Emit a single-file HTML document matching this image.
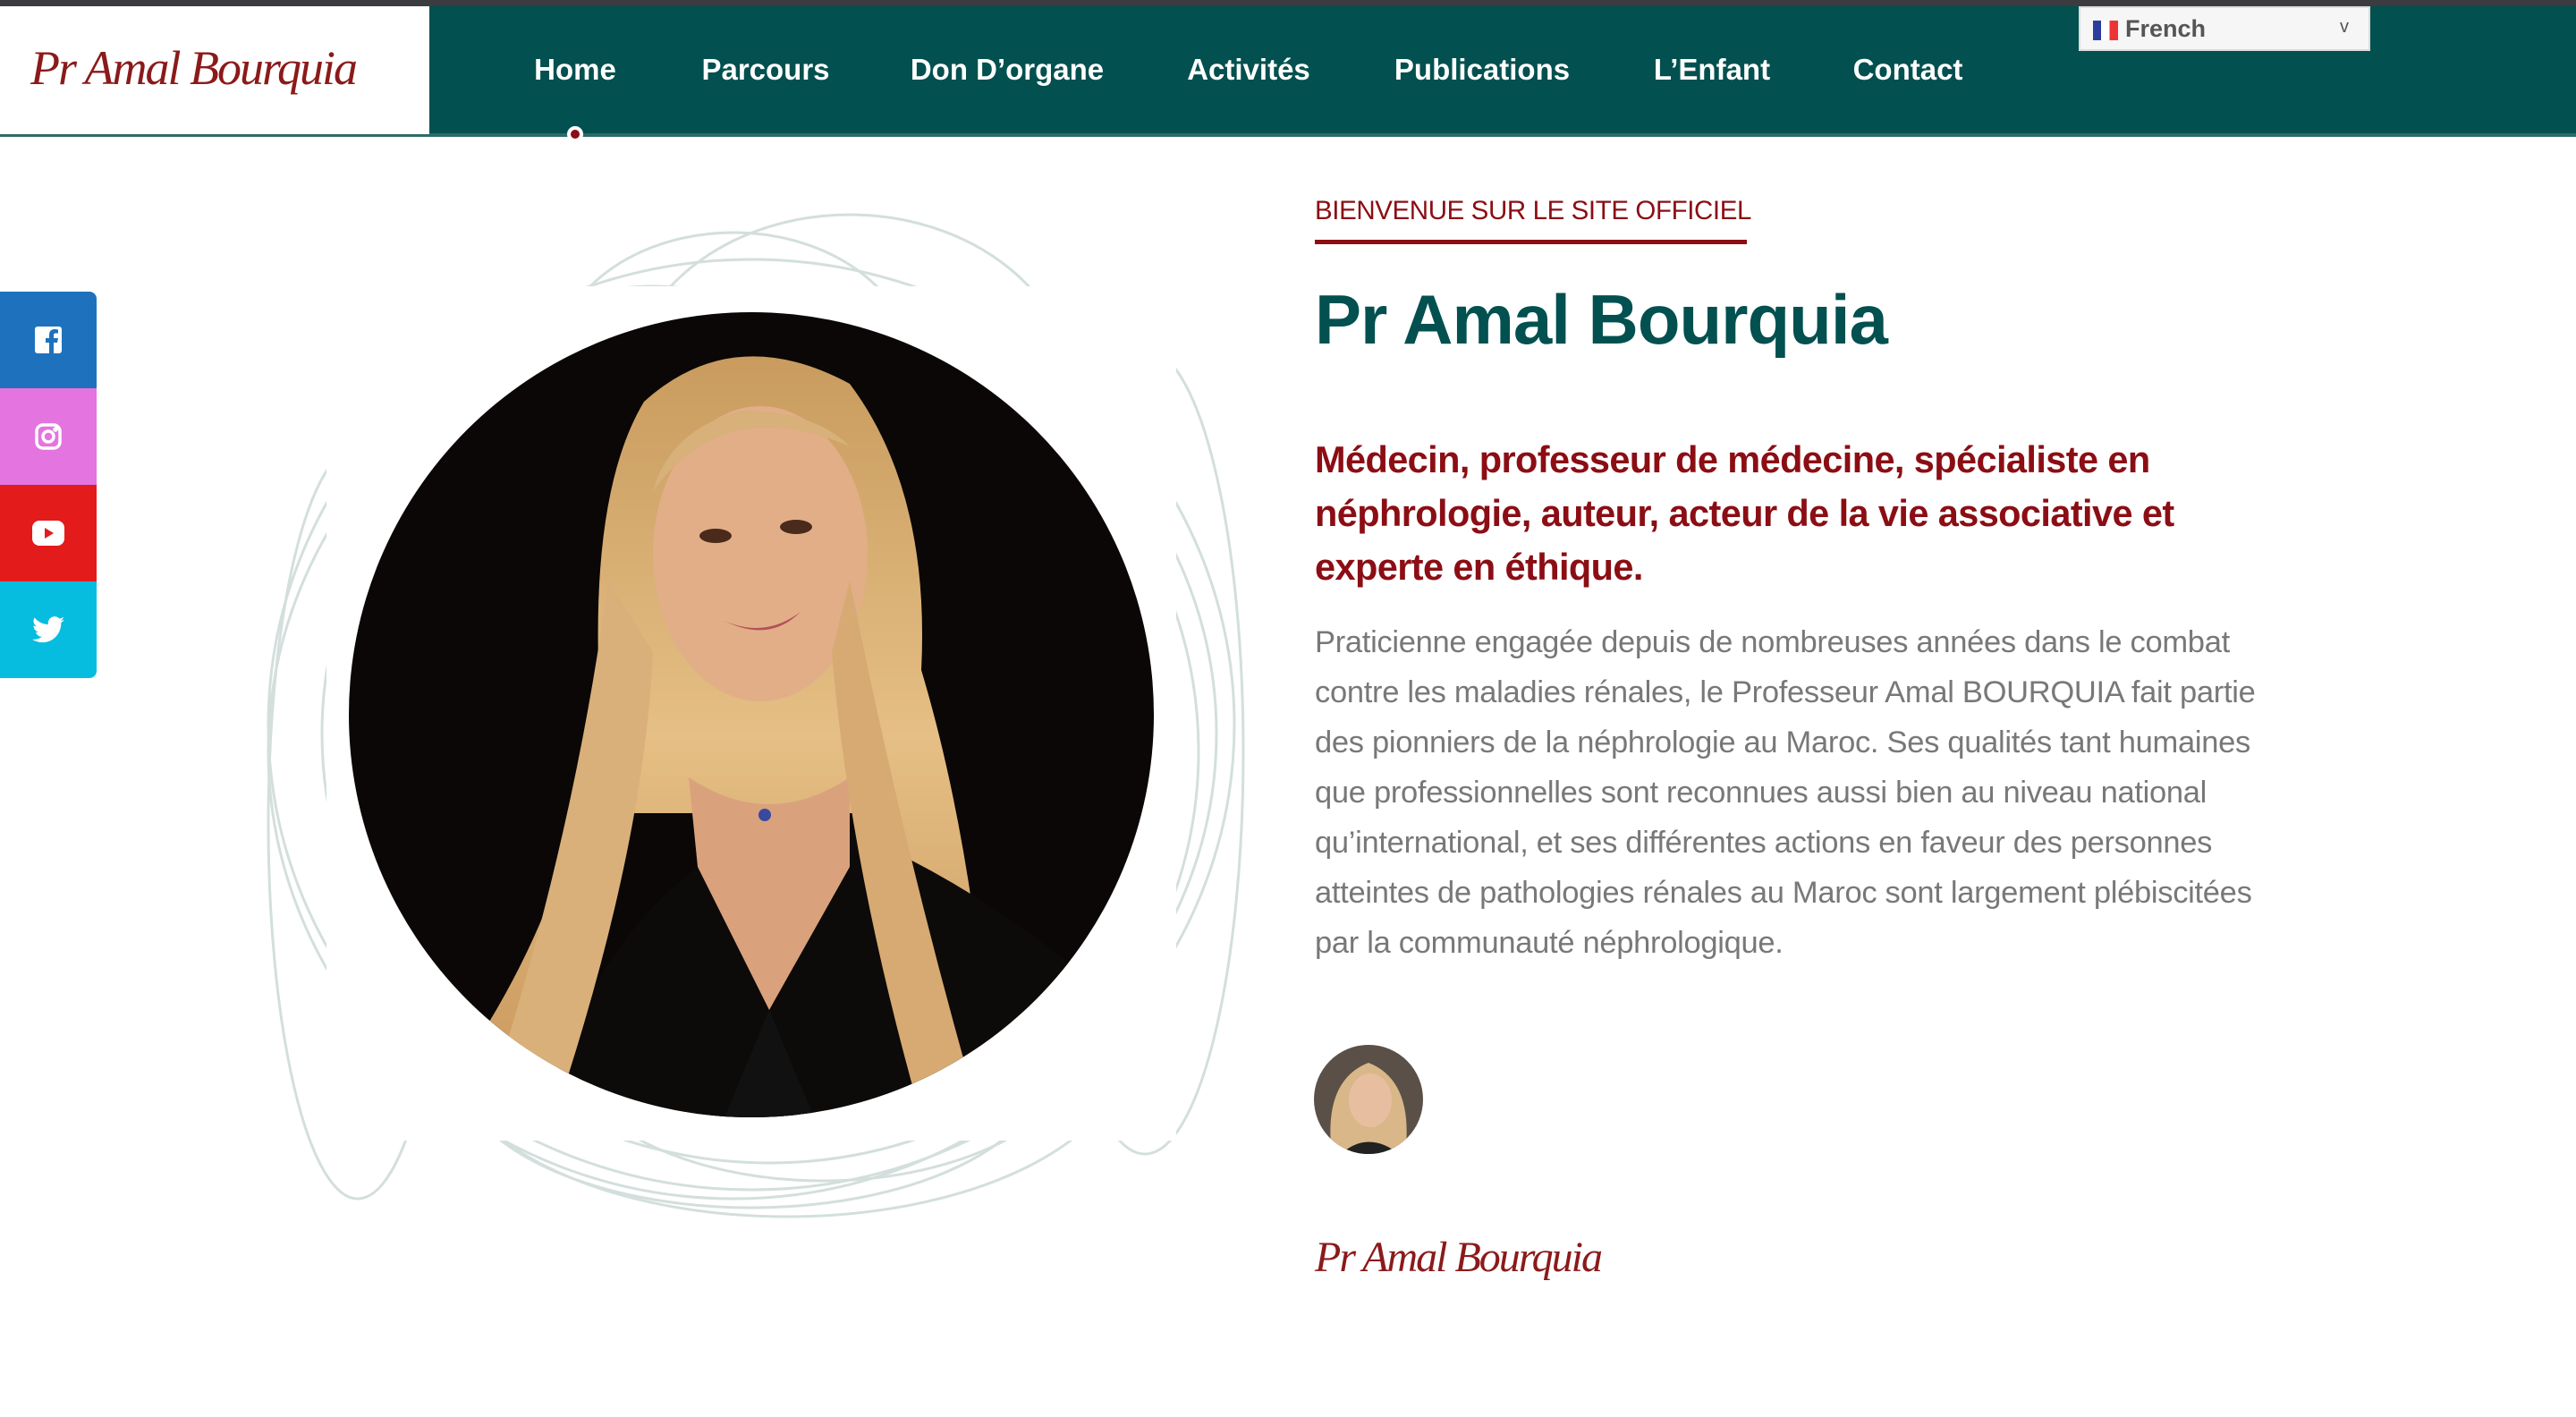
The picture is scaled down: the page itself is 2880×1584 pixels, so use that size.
<!DOCTYPE html>
<html><head><meta charset="utf-8"><style>
*{margin:0;padding:0;box-sizing:border-box}
html,body{width:2880px;height:1584px;overflow:hidden;background:#fff;font-family:"Liberation Sans",sans-serif}
.topbar{position:absolute;left:0;top:0;width:2880px;height:7px;background:#3b3c3f}
.nav{position:absolute;left:0;top:7px;width:2880px;height:146px;background:#02504f;border-bottom:4px solid #2b6b69}
.logo{position:absolute;left:0;top:7px;width:480px;height:146px;background:#fff;border-bottom:3px solid #2b6b69}
.logo span{position:absolute;left:34px;top:38px;font-family:"Liberation Serif",serif;font-style:italic;font-size:54px;color:#8b1a1a;letter-spacing:-2px;white-space:nowrap}
.ni{position:absolute;top:59px;color:#fff;font-weight:bold;font-size:33px;transform:translateX(-50%);white-space:nowrap}
.dot{position:absolute;left:634px;top:141px;width:18px;height:18px;border-radius:50%;background:#8b0e14;border:4px solid #fff}
.lang{position:absolute;left:2324px;top:7px;width:326px;height:50px;background:#f6f6f6;border:2px solid #ddd;font-size:27px;color:#555;font-weight:bold;padding:8px 0 0 50px}
.flag{position:absolute;left:14px;top:14px;width:28px;height:22px;background:linear-gradient(90deg,#2a3d9c 33%,#fff 33%,#fff 66%,#e33 66%)}
.lang i{position:absolute;right:22px;top:10px;font-style:normal;font-weight:normal;font-size:20px}
.soc{position:absolute;left:0;width:108px;height:108px;display:flex;align-items:center;justify-content:center}
.h{position:absolute;color:#02504f;font-weight:bold;font-size:78px;left:1470px;top:312px;white-space:nowrap;letter-spacing:-1px}
.kick{position:absolute;left:1470px;top:219px;color:#8b0e14;font-size:29.5px;white-space:nowrap;letter-spacing:-0.4px}
.kline{position:absolute;left:1470px;top:268px;width:483px;height:5px;background:#8b0e14}
.sub{position:absolute;left:1470px;top:484px;color:#8b0e14;font-weight:bold;font-size:41.5px;line-height:60px;white-space:nowrap;letter-spacing:-0.6px}
.p{position:absolute;left:1470px;top:690px;color:#787878;font-size:34.5px;line-height:56px;white-space:nowrap;letter-spacing:-0.3px}
.sig{position:absolute;left:1470px;top:1378px;font-family:"Liberation Serif",serif;font-style:italic;color:#8b1a1a;font-size:48px;letter-spacing:-2px;white-space:nowrap}
</style></head><body>
<div class="topbar"></div>
<div class="nav"></div>
<div class="logo"><span>Pr Amal Bourquia</span></div>
<div class="ni" style="left:643px">Home</div>
<div class="ni" style="left:856px">Parcours</div>
<div class="ni" style="left:1126px">Don D’organe</div>
<div class="ni" style="left:1396px">Activités</div>
<div class="ni" style="left:1657px">Publications</div>
<div class="ni" style="left:1914px">L’Enfant</div>
<div class="ni" style="left:2133px">Contact</div>
<div class="dot"></div>
<div class="lang"><div class="flag"></div>French<i>v</i></div>

<div class="soc" style="top:326px;background:#1e72bd;border-top-right-radius:8px"><svg width="30" height="30" viewBox="0 0 30 30"><rect width="30" height="30" rx="3" fill="#fff"/><path d="M21 30V18h4l1-5h-5v-3c0-1.5.5-2.5 2.5-2.5H26V3.5C25 3.3 23.5 3 22 3c-4 0-6 2.5-6 6.5V13h-4v5h4v12z" fill="#1e72bd"/></svg></div>
<div class="soc" style="top:434px;background:#e474e0"><svg width="32" height="32" viewBox="0 0 32 32" fill="none" stroke="#fff" stroke-width="3.5"><rect x="3" y="3" width="26" height="26" rx="7"/><circle cx="16" cy="16" r="6"/><circle cx="24" cy="8" r="1" fill="#fff"/></svg></div>
<div class="soc" style="top:542px;background:#e31b1b"><svg width="36" height="28" viewBox="0 0 36 28"><rect width="36" height="28" rx="8" fill="#fff"/><path d="M14 8v12l10-6z" fill="#e31b1b"/></svg></div>
<div class="soc" style="top:650px;background:#06bde0;border-bottom-right-radius:8px"><svg width="36" height="30" viewBox="0 0 24 20"><path d="M24 2.4c-.9.4-1.8.6-2.8.8 1-.6 1.8-1.6 2.2-2.7-1 .6-2 1-3.1 1.2A4.9 4.9 0 0 0 11.9 6 14 14 0 0 1 1.7.9a4.9 4.9 0 0 0 1.5 6.6c-.8 0-1.6-.3-2.2-.6 0 2.4 1.7 4.4 3.900 4.8-.7.2-1.5.2-2.2.1.6 2 2.4 3.4 4.6 3.4A9.9 9.9 0 0 1 0 17.2 14 14 0 0 0 7.5 19.4c9.1 0 14-7.5 14-14v-.6c1-.7 1.8-1.6 2.5-2.4z" fill="#fff"/></svg></div>

<svg style="position:absolute;left:260px;top:220px" width="1160" height="1160" viewBox="0 0 1160 1160" fill="none" stroke="#d3dfdd" stroke-width="3">
<ellipse cx="560" cy="190" rx="200" ry="150"/>
<ellipse cx="690" cy="220" rx="250" ry="200"/>
<ellipse cx="470" cy="240" rx="200" ry="140"/>
<ellipse cx="580" cy="590" rx="540" ry="520"/>
<ellipse cx="600" cy="600" rx="500" ry="480"/>
<ellipse cx="560" cy="620" rx="520" ry="500"/>
<ellipse cx="620" cy="950" rx="380" ry="190"/>
<ellipse cx="580" cy="970" rx="330" ry="160"/>
<ellipse cx="660" cy="930" rx="300" ry="170"/>
<ellipse cx="1020" cy="620" rx="110" ry="450"/>
<ellipse cx="140" cy="700" rx="100" ry="420"/>
</svg>
<div style="position:absolute;left:365px;top:320px;width:950px;height:955px;background:#fff"></div>

<svg style="position:absolute;left:390px;top:349px" width="900" height="900" viewBox="0 0 900 900">
<defs><clipPath id="c"><circle cx="450" cy="450" r="450"/></clipPath>
<linearGradient id="hair" x1="0" y1="0" x2="0" y2="1"><stop offset="0" stop-color="#c99b5e"/><stop offset=".5" stop-color="#e5bf85"/><stop offset="1" stop-color="#c8955a"/></linearGradient></defs>
<g clip-path="url(#c)">
<rect width="900" height="900" fill="#0a0706"/>
<path d="M330 100 Q430 10 560 80 Q650 200 640 400 Q700 600 720 880 L640 900 L600 560 L280 560 L200 900 L120 850 Q260 650 280 420 Q270 200 330 100z" fill="url(#hair)"/>
<path d="M220 900 Q260 720 390 620 L560 580 Q700 640 820 740 L860 900z" fill="#0d0a0a"/>
<path d="M380 520 Q470 580 560 520 L560 620 L470 780 L390 620z" fill="#d9a27c"/>
<path d="M470 780 L420 900 L520 900z" fill="#111"/>
<ellipse cx="460" cy="270" rx="120" ry="165" fill="#e2ae88"/>
<path d="M340 200 Q420 90 560 150 Q520 110 440 110 Q360 130 340 200z" fill="#d8b07a"/>
<ellipse cx="410" cy="250" rx="18" ry="8" fill="#4a2a1a"/><ellipse cx="500" cy="240" rx="18" ry="8" fill="#4a2a1a"/>
<path d="M420 345 Q465 365 505 335 Q470 370 420 345z" fill="#b5505a"/>
<path d="M290 300 Q250 600 150 900 L230 900 Q330 600 340 380z" fill="#d9b07a"/>
<path d="M560 300 Q620 600 700 880 L640 900 Q560 620 540 380z" fill="#d6aa72"/>
<circle cx="465" cy="562" r="7" fill="#3949a0"/>
</g></svg>

<div class="kick">BIENVENUE SUR LE SITE OFFICIEL</div>
<div class="kline"></div>
<div class="h">Pr Amal Bourquia</div>
<div class="sub">Médecin, professeur de médecine, spécialiste en<br>néphrologie, auteur, acteur de la vie associative et<br>experte en éthique.</div>
<div class="p">Praticienne engagée depuis de nombreuses années dans le combat<br>contre les maladies rénales, le Professeur Amal BOURQUIA fait partie<br>des pionniers de la néphrologie au Maroc. Ses qualités tant humaines<br>que professionnelles sont reconnues aussi bien au niveau national<br>qu’international, et ses différentes actions en faveur des personnes<br>atteintes de pathologies rénales au Maroc sont largement plébiscitées<br>par la communauté néphrologique.</div>
<svg style="position:absolute;left:1469px;top:1168px" width="122" height="122" viewBox="0 0 122 122"><defs><clipPath id="a"><circle cx="61" cy="61" r="61"/></clipPath></defs><g clip-path="url(#a)"><rect width="122" height="122" fill="#5a5048"/><path d="M20 122 Q10 40 61 20 Q112 40 102 122z" fill="#d9b789"/><ellipse cx="63" cy="62" rx="24" ry="30" fill="#e8bea0"/><path d="M30 122 Q61 95 95 122z" fill="#222"/></g></svg>
<div class="sig">Pr Amal Bourquia</div>
</body></html>
